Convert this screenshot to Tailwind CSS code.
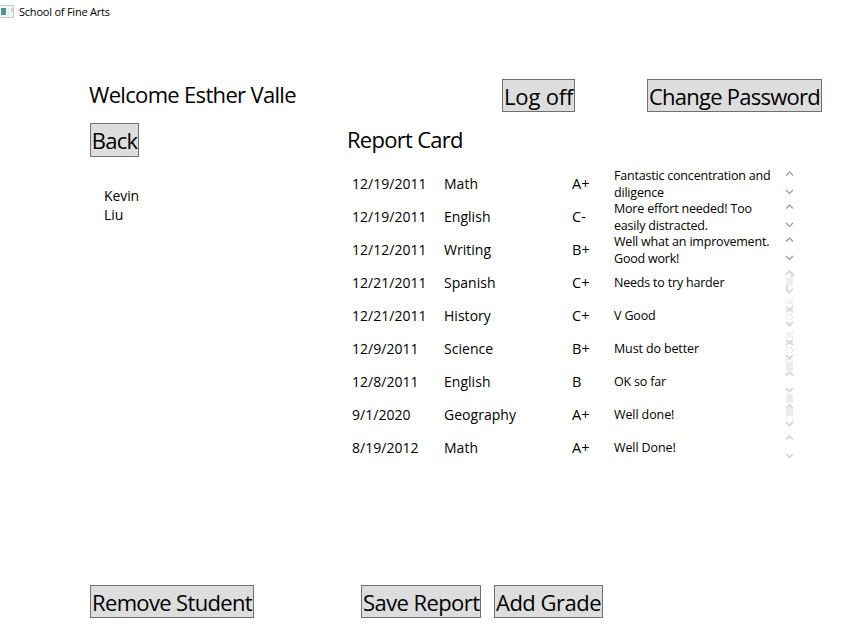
<!DOCTYPE html>
<html lang="en">
<head>
<meta charset="utf-8">
<title>School of Fine Arts</title>
<script src="https://cdn.jsdelivr.net/npm/@tailwindcss/browser@4"></script>
</head>
<body class="bg-white text-black">
<div class="flex h-[625px] w-[862px] flex-col overflow-hidden font-['Open_Sans','Noto_Sans',sans-serif] whitespace-nowrap">
  <header class="flex h-[23px] shrink-0 items-center">
    <svg class="mb-px h-[13px] w-[14px]" viewBox="0 0 14 13"><path d="M0 .5H13.5V12.5H0" fill="#f7f8fb" stroke="#c4c7ce"/><path d="M1 3h5v7H1z" fill="#4b9a84"/><path d="M1 3h2v7H1z" fill="#5a90a4"/><path d="M7 3h3v7H7z" fill="#eef2f7"/><path d="M11 3h1.5v4H11z" fill="#b5d6c3"/></svg>
    <h1 class="ml-[5px] text-[11px] leading-4 tracking-[-0.22px]">School of Fine Arts</h1>
  </header>

  <div class="mt-[56px] flex h-[33px] shrink-0 pl-[89px]">
    <div class="w-[413px] text-[22px] leading-[30px] tracking-[-0.67px]">Welcome Esther Valle</div>
    <button class="h-[33px] w-[73px] border border-[#707070] bg-[#ddd] pl-px text-left text-[22px] leading-[33px] tracking-[-0.15px]">Log off</button>
    <button class="ml-[72px] h-[33px] w-[175px] border border-[#707070] bg-[#ddd] pl-px text-left text-[22px] leading-[33px] tracking-[-0.76px]">Change Password</button>
  </div>

  <div class="mt-[11px] flex h-[34px] shrink-0 pl-[90px]">
    <button class="h-[34px] w-[49px] border border-[#707070] bg-[#ddd] text-[22px] leading-[33px] tracking-[-0.7px]">Back</button>
    <h2 class="ml-[208px] text-[22px] leading-[33px] tracking-[-0.72px]">Report Card</h2>
  </div>

  <main class="mt-[10px] flex h-[418px] shrink-0">
    <div class="w-[352px] pt-[19px] pl-[104px] text-[14px] leading-[19px] tracking-[-0.1px]"><div>Kevin</div><div>Liu</div></div>
    <div class="grid h-[297px] w-[433px] grid-cols-[92px_128px_42px_171px] grid-rows-9 items-center text-[14px] leading-[19px] tracking-[0.03px]">
      <div>12/19/2011</div><div>Math</div><div class="text-[14.5px]">A+</div><div class="pt-px text-[12.5px] leading-[17.5px] tracking-[-0.2px]">Fantastic concentration and<br>diligence</div>
      <div>12/19/2011</div><div>English</div><div class="text-[14.5px]">C-</div><div class="pt-px text-[12.5px] leading-[17.5px] tracking-[-0.2px]">More effort needed! Too<br>easily distracted.</div>
      <div>12/12/2011</div><div>Writing</div><div class="text-[14.5px]">B+</div><div class="pt-px text-[12.5px] leading-[17.5px] tracking-[-0.2px]">Well what an improvement.<br>Good work!</div>
      <div>12/21/2011</div><div>Spanish</div><div class="text-[14.5px]">C+</div><div class="text-[12.5px] leading-[17.5px] tracking-[-0.2px]">Needs to try harder</div>
      <div>12/21/2011</div><div>History</div><div class="text-[14.5px]">C+</div><div class="text-[12.5px] leading-[17.5px] tracking-[-0.15px]">V Good</div>
      <div>12/9/2011</div><div>Science</div><div class="text-[14.5px]">B+</div><div class="text-[12.5px] leading-[17.5px] tracking-[-0.13px]">Must do better</div>
      <div>12/8/2011</div><div>English</div><div class="text-[14.5px]">B</div><div class="text-[12.5px] leading-[17.5px] tracking-[-0.2px]">OK so far</div>
      <div>9/1/2020</div><div>Geography</div><div class="text-[14.5px]">A+</div><div class="text-[12.5px] leading-[17.5px] tracking-[-0.1px]">Well done!</div>
      <div>8/19/2012</div><div>Math</div><div class="text-[14.5px]">A+</div><div class="text-[12.5px] leading-[17.5px] tracking-[-0.1px]">Well Done!</div>
    </div>
    <svg class="h-[297px] w-[9px] shrink-0" viewBox="0 0 9 297" fill="none">
      <defs><path id="up" d="M1 4.5L4.5 1L8 4.5"/><path id="dn" d="M1 1L4.5 4.5L8 1"/></defs>
      <g stroke="#999" stroke-width="1.2">
        <use href="#up" y="4"/><use href="#dn" y="22"/>
        <use href="#up" y="37"/><use href="#dn" y="55"/>
        <use href="#up" y="70"/><use href="#dn" y="88"/>
      </g>
      <g fill="#ededed"><path d="M1 111h7v8H1zM1 195h7v9H1zM1 227h7v9H1zM1 241h7v8H1z"/></g>
      <g stroke="#dadada" stroke-width="2">
        <use href="#up" y="103"/><path d="M6 106l2 2-2 2"/><use href="#dn" y="121"/><path d="M2 119v4l3 3"/>
        <use href="#dn" y="154"/><use href="#dn" y="187"/><use href="#up" y="204"/>
        <use href="#dn" y="220"/><use href="#up" y="237"/><use href="#dn" y="254"/>
      </g>
      <g stroke="#e0e0e0" stroke-width="1.3">
        <path d="M1 140l7 5M8 140l-7 5M1 173l7 5M8 173l-7 5" stroke="#d8d8d8" stroke-width="1.7"/>
        <path d="M1 133l3 2 4-3M1 137l3-2 4 3M1 166l3 2 4-3M1 170l3-2 4 3" stroke-dasharray="1.5 1"/>
        <path d="M3 147l-2 3 2 3M6 147l2 3-2 3M3 180l-2 3 2 3M6 180l2 3-2 3" stroke-dasharray="2 1"/>
        <path d="M1 193h7M1 250l2 2M7 250l1 3" stroke-dasharray="2 1"/>
      </g>
      <g stroke="#d0d0d0" stroke-width="1.5"><use href="#up" y="268"/><use href="#dn" y="286"/></g>
    </svg>
  </main>

  <footer class="flex h-[33px] shrink-0 pl-[90px]">
    <button class="h-[33px] w-[164px] border border-[#707070] bg-[#ddd] pl-px text-left text-[22px] leading-[32px] tracking-[-0.65px]">Remove Student</button>
    <button class="ml-[107px] h-[33px] w-[120px] border border-[#707070] bg-[#ddd] pl-px text-left text-[22px] leading-[32px] tracking-[-0.58px]">Save Report</button>
    <button class="ml-[13px] h-[33px] w-[109px] border border-[#707070] bg-[#ddd] pl-px text-left text-[22px] leading-[32px] tracking-[-0.5px]">Add Grade</button>
  </footer>
</div>
</body>
</html>
